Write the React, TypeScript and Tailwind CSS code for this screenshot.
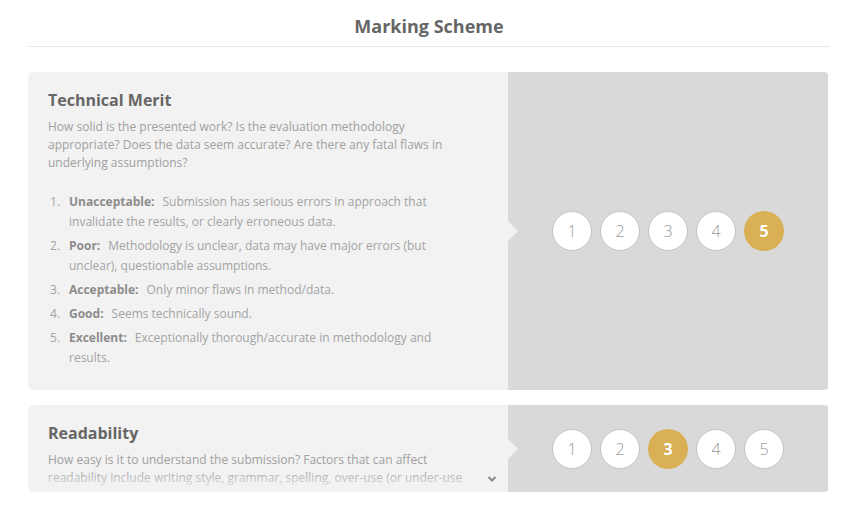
import React from "react";

const items = [
  ["Unacceptable:", "Submission has serious errors in approach that invalidate the results, or clearly erroneous data."],
  ["Poor:", "Methodology is unclear, data may have major errors (but unclear), questionable assumptions."],
  ["Acceptable:", "Only minor flaws in method/data."],
  ["Good:", "Seems technically sound."],
  ["Excellent:", "Exceptionally thorough/accurate in methodology and results."],
];

function Scores({ selected }: { selected: number }) {
  return (
    <div className="relative flex w-[320px] shrink-0 items-center justify-center gap-2 bg-[#d9d9d9]">
      <div className="absolute left-0 top-1/2 -translate-y-1/2 border-y-[10px] border-l-[10px] border-y-transparent border-l-[#f2f2f2]" />
      {[1, 2, 3, 4, 5].map((n) =>
        n === selected ? (
          <div key={n} className="flex h-10 w-10 items-center justify-center rounded-full bg-[#d9b056] text-[16px] font-bold text-white">
            {n}
          </div>
        ) : (
          <div key={n} className="flex h-10 w-10 items-center justify-center rounded-full border border-[#c4c4c4] bg-white text-[16px] font-light text-[#999]">
            {n}
          </div>
        )
      )}
    </div>
  );
}

export default function App() {
  return (
    <div className="h-[508px] w-[858px] bg-white px-7" style={{ fontFamily: '"Open Sans", sans-serif' }}>
      <div className="flex h-[47px] items-end justify-center border-b border-[#e6e6e6] pb-[8px]">
        <h1 className="text-[18px] font-bold leading-[24px] text-[#666]">Marking Scheme</h1>
      </div>
      <div className="mt-[25px] flex overflow-hidden rounded-md">
        <div className="w-[480px] shrink-0 bg-[#f2f2f2] pb-[22px] pl-5 pr-10 pt-[18px]">
          <h2 className="text-[16px] font-bold leading-[20px] text-[#666]">Technical Merit</h2>
          <p className="mt-2 text-[12px] leading-[18px] text-[#a0a0a0]">
            How solid is the presented work? Is the evaluation methodology appropriate? Does the data seem accurate? Are there any fatal flaws in underlying assumptions?
          </p>
          <div className="mt-5 flex flex-col gap-1 text-[12px] leading-[20px] text-[#a3a3a3]">
            {items.map(([label, text], i) => (
              <div key={label} className="flex">
                <span className="w-[21px] shrink-0 pl-[2px]">{i + 1}.</span>
                <p className="min-w-0 flex-1">
                  <span className="mr-2 font-bold text-[#8c8c8c]">{label}</span>
                  {text}
                </p>
              </div>
            ))}
          </div>
        </div>
        <Scores selected={5} />
      </div>
      <div className="mt-[15px] flex h-[87px] overflow-hidden rounded-md">
        <div className="relative w-[480px] shrink-0 overflow-hidden bg-[#f2f2f2] pl-5 pr-10 pt-[18px]">
          <h2 className="text-[16px] font-bold leading-[20px] text-[#666]">Readability</h2>
          <p className="mt-2 text-[12px] leading-[18px] text-[#a0a0a0]">
            How easy is it to understand the submission? Factors that can affect readability include writing style, grammar, spelling, over-use (or under-use of) jargon, and overall organisation.
          </p>
          <div className="absolute bottom-0 left-0 right-0 h-[22px] bg-gradient-to-b from-[#f2f2f2]/0 to-[#f2f2f2]" />
          <svg className="absolute bottom-[9px] right-[11px]" width="10" height="8" viewBox="0 0 10 8">
            <path d="M1.5 2 L5 5.5 L8.5 2" fill="none" stroke="#888" strokeWidth="2" />
          </svg>
        </div>
        <Scores selected={3} />
      </div>
    </div>
  );
}
